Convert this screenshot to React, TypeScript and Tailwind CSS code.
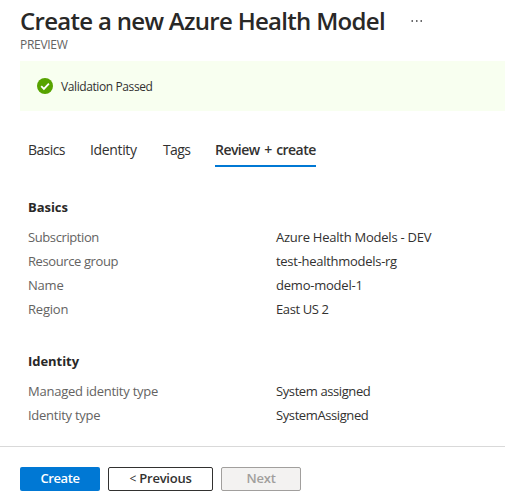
type Row = { label: string; value: string; labelClass?: string; valueClass?: string };

const basics: Row[] = [
  { label: 'Subscription', value: 'Azure Health Models - DEV', labelClass: 'tracking-[-0.4px]', valueClass: 'tracking-[-0.24px]' },
  { label: 'Resource group', value: 'test-healthmodels-rg', labelClass: 'tracking-[-0.4px]', valueClass: 'tracking-[-0.28px]' },
  { label: 'Name', value: 'demo-model-1', valueClass: 'tracking-[-0.22px]' },
  { label: 'Region', value: 'East US 2', valueClass: 'tracking-[-0.38px]' },
];

const identity: Row[] = [
  { label: 'Managed identity type', value: 'System assigned', labelClass: 'tracking-[-0.24px]', valueClass: 'tracking-[-0.4px]' },
  { label: 'Identity type', value: 'SystemAssigned', labelClass: 'tracking-[-0.26px]', valueClass: 'tracking-[-0.4px]' },
];

function Section({ title, rows }: { title: string; rows: Row[] }) {
  return (
    <section>
      <h2 className="h-[18px] text-[13px] leading-[18px] font-bold tracking-[-0.05px] text-[#292827]">{title}</h2>
      <dl className="mt-[9px]">
        {rows.map((row) => (
          <div key={row.label} className="flex h-6 items-center text-[13px] leading-[18px] whitespace-nowrap">
            <dt className={`w-[248px] text-[#646362] ${row.labelClass ?? ''}`}>{row.label}</dt>
            <dd className={`text-[#323130] ${row.valueClass ?? ''}`}>{row.value}</dd>
          </div>
        ))}
      </dl>
    </section>
  );
}

export default function App() {
  return (
    <div className="flex h-[502px] w-[505px] flex-col overflow-hidden bg-white font-['Open_Sans','Noto_Sans',sans-serif] text-[13px] tracking-[-0.2px] text-[#323130]">
      <header className="h-[61px] pl-5">
        <div className="flex h-[37px] items-center pt-[5px]">
          <h1 className="w-[391px] text-[24px] leading-8 font-[550] tracking-[-0.7px] whitespace-nowrap text-[#292827]">
            Create a new Azure Health Model
          </h1>
          <svg width="12" height="2" viewBox="0 0 12 2" fill="#69696b" aria-label="More">
            <rect x="0.5" width="1.5" height="2" />
            <rect x="5" width="1.5" height="2" />
            <rect x="9.5" width="1.5" height="2" />
          </svg>
        </div>
        <p className="text-[12px] leading-4 tracking-[-0.3px] text-[#646362]">PREVIEW</p>
      </header>

      <div className="ml-5 flex h-[50px] items-center bg-[#f8fff0] pl-[17px]">
        <svg width="16" height="16" viewBox="0 0 16 16">
          <circle cx="8" cy="8" r="8" fill="#57a300" />
          <path d="M4.2 8.2 6.9 10.9 11.9 5.6" fill="none" stroke="#fff" strokeWidth="1.8" />
        </svg>
        <span className="ml-2 pt-0.5 text-[12px] tracking-[-0.4px]">Validation Passed</span>
      </div>

      <nav className="mt-[26px] ml-7 flex h-[30px] text-[14px] leading-[26px] tracking-[-0.6px] whitespace-nowrap">
        <span className="w-[62px]">Basics</span>
        <span className="w-[73px] tracking-[-0.35px]">Identity</span>
        <span className="w-[52px]">Tags</span>
        <span className="w-[101px] border-b-2 border-[#0078d4] font-[550] tracking-[-0.55px] [word-spacing:1.5px]">Review + create</span>
      </nav>

      <main className="mt-[31px] flex h-[248px] shrink-0 flex-col gap-[31px] pl-7">
        <Section title="Basics" rows={basics} />
        <Section title="Identity" rows={identity} />
      </main>

      <footer className="flex h-14 shrink-0 gap-2 border-t border-[#d9d9d9] pt-5 pl-5 font-semibold">
        <button className="h-6 w-20 rounded-[2px] bg-[#0078d4] tracking-[-0.4px] text-white">Create</button>
        <button className="h-6 w-[105px] rounded-[2px] border border-[#323130] font-[550] tracking-[-0.25px]">
          <span className="text-[12px] font-normal">&lt;</span> Previous
        </button>
        <button className="h-6 w-20 rounded-[2px] border border-[#a19f9d] bg-[#f3f2f1] text-[#a19f9d]" disabled>
          Next
        </button>
      </footer>
    </div>
  );
}
